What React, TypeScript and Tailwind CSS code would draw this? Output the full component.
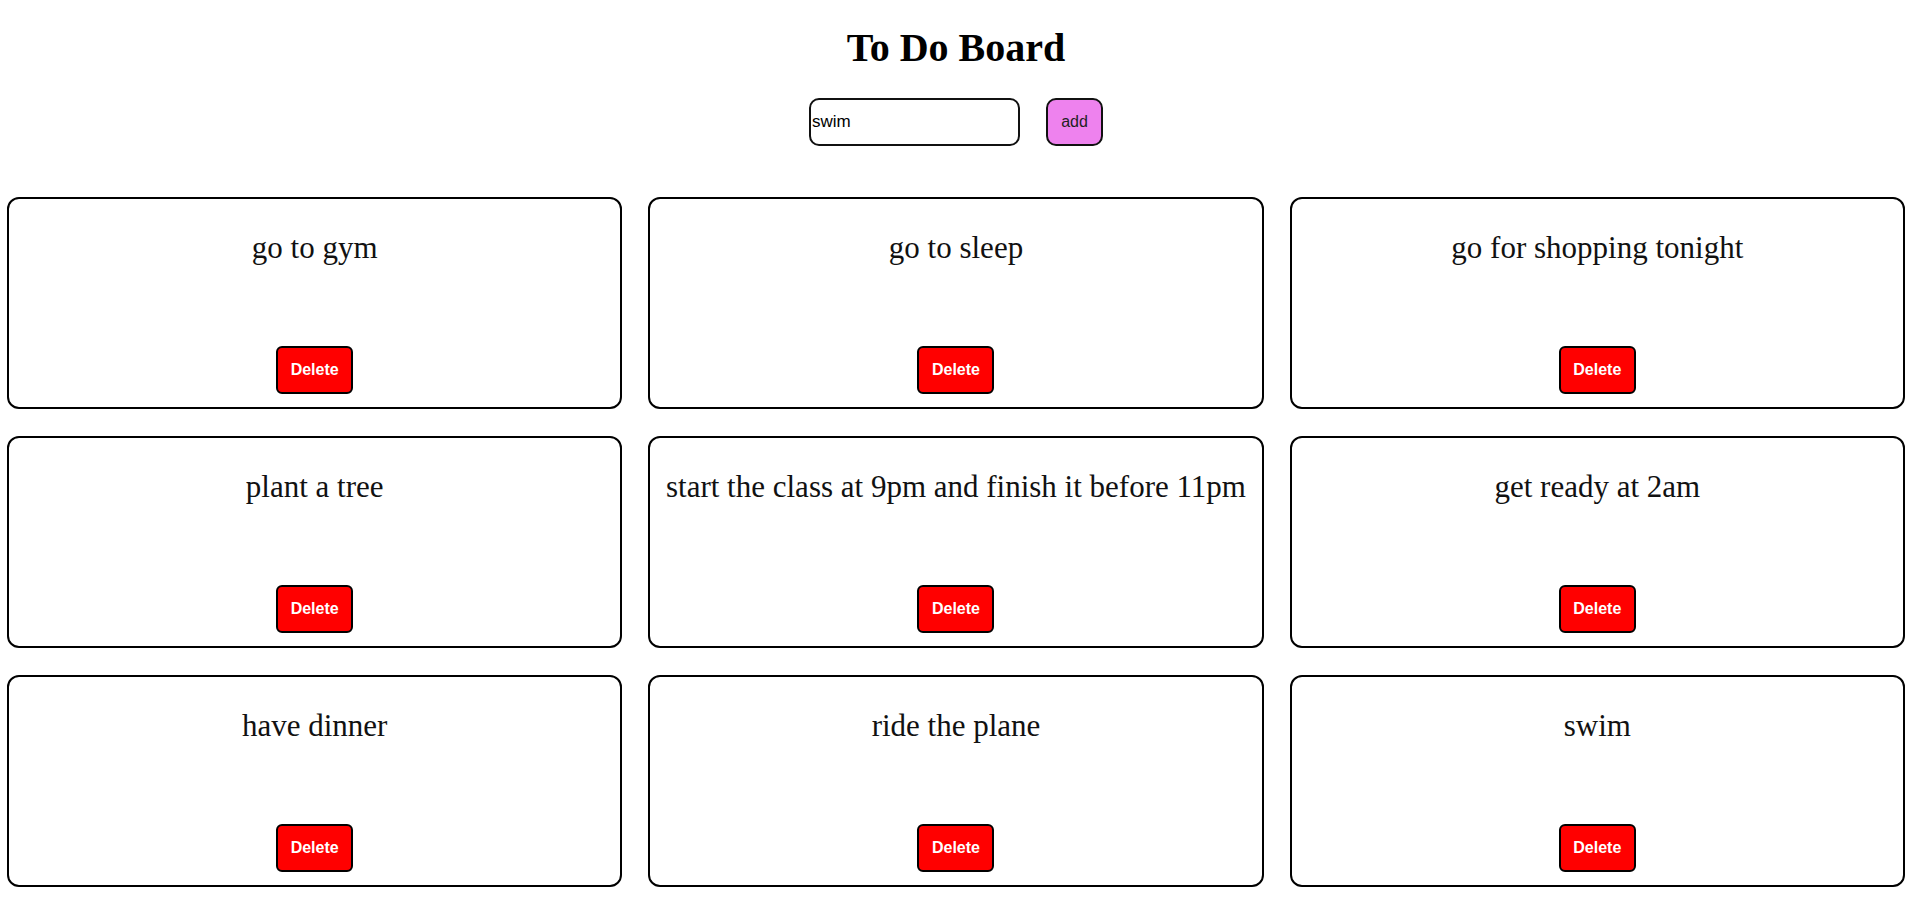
import { useState } from 'react';

const initialTodos = [
  'go to gym',
  'go to sleep',
  'go for shopping tonight',
  'plant a tree',
  'start the class at 9pm and finish it before 11pm',
  'get ready at 2am',
  'have dinner',
  'ride the plane',
  'swim',
];

function TodoCard({ text, onDelete }: { text: string; onDelete: () => void }) {
  return (
    <div className="h-[212px] border-2 border-black rounded-[12px] flex flex-col items-center pt-[32px] pb-[13px]">
      <p className="text-[31px] leading-[34px] text-center text-[#111] font-['Liberation_Serif',serif]">{text}</p>
      <button
        onClick={onDelete}
        className="mt-auto w-[77px] h-[48px] bg-[#ff0000] border-2 border-black rounded-[6px] text-white font-bold text-[16px] font-['Liberation_Sans',Arial,sans-serif]"
      >
        Delete
      </button>
    </div>
  );
}

export default function App() {
  const [todos, setTodos] = useState<string[]>(initialTodos);
  const [value, setValue] = useState('swim');

  const addTodo = () => {
    if (!value.trim()) return;
    setTodos([...todos, value]);
  };

  return (
    <div className="min-h-screen bg-white font-['Liberation_Serif',serif]">
      <h1 className="pt-[25px] text-center text-[40px] leading-[46px] font-bold text-black">To Do Board</h1>
      <div className="mt-[27px] flex justify-center gap-[26px]">
        <input
          value={value}
          onChange={(e) => setValue(e.target.value)}
          className="w-[211px] h-[48px] border-2 border-[#111] rounded-[10px] px-[1px] text-[17px] text-black outline-none font-['Liberation_Sans',Arial,sans-serif]"
        />
        <button
          onClick={addTodo}
          className="w-[57px] h-[48px] bg-[#ee82ee] border-2 border-[#111] rounded-[10px] text-[16px] text-[#222] font-['Liberation_Sans',Arial,sans-serif]"
        >
          add
        </button>
      </div>
      {/* board */}
      <div className="mt-[51px] px-[7px] grid grid-cols-3 gap-x-[26px] gap-y-[27px]">
        {todos.map((t, i) => (
          <TodoCard key={i} text={t} onDelete={() => setTodos(todos.filter((_, j) => j !== i))} />
        ))}
      </div>
    </div>
  );
}
